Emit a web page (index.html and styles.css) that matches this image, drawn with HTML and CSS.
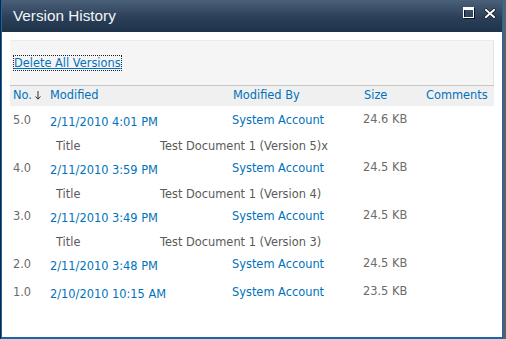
FILE: index.html
```html
<!DOCTYPE html>
<html lang="en">
<head>
    <meta charset="UTF-8">
    <title>Version History</title>
    <link rel="stylesheet" href="styles.css">
</head>
<body>
    <div class="frame">
        <div class="dialog">
            <div class="title-bar">
                <span class="dialog-title">Version History</span>
                <div class="title-buttons">
                    <svg class="btn-max" width="12" height="12" viewBox="0 0 12 12">
                        <rect x="1.5" y="1.5" width="10" height="10" fill="none" stroke="#0b1520" stroke-width="1"/>
                        <rect x="0.5" y="0.5" width="10" height="10" fill="none" stroke="#ffffff" stroke-width="1"/>
                        <rect x="0" y="0" width="11" height="3" fill="#ffffff"/>
                    </svg>
                    <svg class="btn-close" width="12" height="11" viewBox="0 0 12 11">
                        <path d="M2 2 L10 9 M10 2 L2 9" stroke="#0b1520" stroke-width="3.4" stroke-linecap="square"/>
                        <path d="M2 2 L10 9 M10 2 L2 9" stroke="#ffffff" stroke-width="2" stroke-linecap="square"/>
                    </svg>
                </div>
            </div>

            <div class="dialog-body">
                <div class="toolbar">
                    <a class="toolbar-link" href="#">Delete All Versions</a>
                </div>

                <table class="versions">
                    <colgroup>
                        <col class="col-no">
                        <col class="col-modified">
                        <col class="col-by">
                        <col class="col-size">
                        <col>
                    </colgroup>
                    <thead>
                        <tr>
                            <th>No.<svg class="sort-arrow" width="6" height="9" viewBox="0 0 6 9">
                                    <path d="M3 0 V8 M0.5 5.5 L3 8.2 L5.5 5.5" fill="none" stroke="#333" stroke-width="1"/>
                                </svg></th>
                            <th>Modified</th>
                            <th class="th-shift">Modified By</th>
                            <th class="th-shift">Size</th>
                            <th>Comments</th>
                        </tr>
                    </thead>
                    <tbody>
                        <tr class="version-row">
                            <td class="cell-no">5.0</td>
                            <td class="cell-date"><a href="#">2/11/2010 4:01 PM</a></td>
                            <td class="cell-by"><a href="#">System Account</a></td>
                            <td class="cell-size">24.6 KB</td>
                            <td></td>
                        </tr>
                        <tr class="prop-row">
                            <td></td>
                            <td colspan="4"><span class="prop-name">Title</span><span class="prop-value">Test Document 1 (Version 5)x</span></td>
                        </tr>
                        <tr class="version-row">
                            <td class="cell-no">4.0</td>
                            <td class="cell-date"><a href="#">2/11/2010 3:59 PM</a></td>
                            <td class="cell-by"><a href="#">System Account</a></td>
                            <td class="cell-size">24.5 KB</td>
                            <td></td>
                        </tr>
                        <tr class="prop-row">
                            <td></td>
                            <td colspan="4"><span class="prop-name">Title</span><span class="prop-value">Test Document 1 (Version 4)</span></td>
                        </tr>
                        <tr class="version-row">
                            <td class="cell-no">3.0</td>
                            <td class="cell-date"><a href="#">2/11/2010 3:49 PM</a></td>
                            <td class="cell-by"><a href="#">System Account</a></td>
                            <td class="cell-size">24.5 KB</td>
                            <td></td>
                        </tr>
                        <tr class="prop-row">
                            <td></td>
                            <td colspan="4"><span class="prop-name">Title</span><span class="prop-value">Test Document 1 (Version 3)</span></td>
                        </tr>
                        <tr class="version-row">
                            <td class="cell-no">2.0</td>
                            <td class="cell-date"><a href="#">2/11/2010 3:48 PM</a></td>
                            <td class="cell-by"><a href="#">System Account</a></td>
                            <td class="cell-size">24.5 KB</td>
                            <td></td>
                        </tr>
                        <tr class="version-row">
                            <td class="cell-no">1.0</td>
                            <td class="cell-date"><a href="#">2/10/2010 10:15 AM</a></td>
                            <td class="cell-by"><a href="#">System Account</a></td>
                            <td class="cell-size">23.5 KB</td>
                            <td></td>
                        </tr>
                    </tbody>
                </table>
            </div>
        </div>
    </div>
</body>
</html>
```

FILE: styles.css
```css
html, body {
    margin: 0;
    padding: 0;
    height: 100%;
    overflow: hidden;
}
body {
    background: #5c6169;
    font-family: 'DejaVu Sans', Verdana, sans-serif;
    font-size: 11.4px;
    line-height: 14px;
}
a {
    color: #0072bc;
    text-decoration: none;
}
.frame {
    width: 503px;
    height: 339px;
    box-sizing: border-box;
    border-left: 1px solid #172536;
}
.dialog {
    height: 339px;
    box-sizing: border-box;
    border-left: 1px solid #1468ad;
    border-right: 1px solid #1468ad;
    border-bottom: 2px solid #1468ad;
    background: #ffffff;
    display: flex;
    flex-direction: column;
}
.title-bar {
    height: 32px;
    box-sizing: border-box;
    padding: 7px 0 0 11px;
    background: linear-gradient(#4b6079, #2b4058 55%, #1e3249);
    display: flex;
    justify-content: space-between;
}
.dialog-title {
    font-family: 'Liberation Sans', Arial, sans-serif;
    font-size: 15.3px;
    line-height: 17px;
    color: #f2f5f8;
}
.title-buttons {
    display: flex;
    gap: 9px;
    padding: 0 6px 0 0;
}
.btn-close {
    margin-top: 1px;
}
.dialog-body {
    flex: 1;
    padding: 8px 8px 0 8px;
}
.toolbar {
    height: 45px;
    box-sizing: border-box;
    padding: 15px 0 0 4px;
    background: #f5f5f5;
    border-top: 1px solid #ebebeb;
    border-right: 1px solid #e3e3e3;
}
.toolbar-link {
    text-decoration: underline;
    outline: 1px dotted #222;
}
.versions {
    width: 100%;
    border-collapse: collapse;
    table-layout: fixed;
}
.col-no { width: 37px; }
.col-modified { width: 182px; }
.col-by { width: 131px; }
.col-size { width: 63px; }
.versions th {
    height: 20px;
    box-sizing: border-box;
    padding: 2px 0 0 3px;
    text-align: left;
    vertical-align: top;
    font-weight: normal;
    color: #0072bc;
    background: #f0f0f0;
    border-top: 1px solid #c6c6c6;
}
.versions .th-shift {
    padding-left: 4px;
}
.sort-arrow {
    margin-left: 3px;
    vertical-align: -1px;
}
.versions td {
    padding: 0 0 0 3px;
    vertical-align: top;
    white-space: nowrap;
}
.version-row td {
    height: 28px;
    box-sizing: border-box;
}
.versions .cell-no {
    padding-top: 7px;
    color: #6a6a6a;
}
.versions .cell-date {
    padding-top: 9px;
}
.versions .cell-by {
    padding-top: 7px;
}
.versions .cell-size {
    padding-top: 6px;
    color: #6a6a6a;
}
.prop-row td {
    height: 20px;
    box-sizing: border-box;
    padding-top: 5px;
    color: #5a5a5a;
}
.prop-name {
    display: inline-block;
    width: 104px;
    padding-left: 6px;
}
```
